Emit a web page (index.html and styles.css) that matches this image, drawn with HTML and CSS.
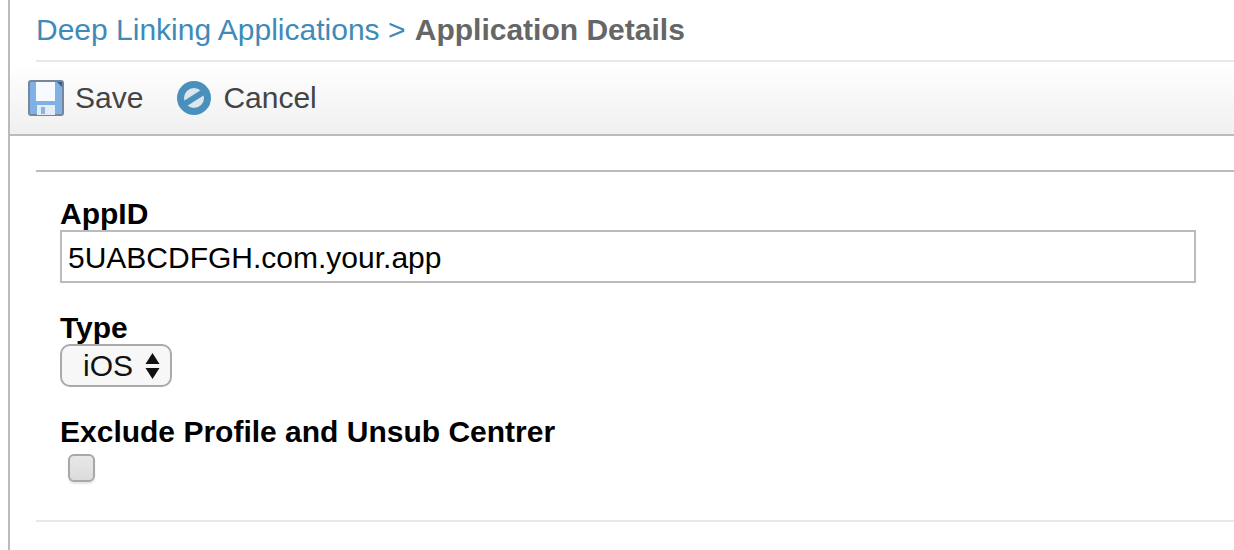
FILE: index.html
```html
<!DOCTYPE html>
<html lang="en">
<head>
    <meta charset="UTF-8">
    <title>Application Details</title>
    <link rel="stylesheet" href="styles.css">
</head>
<body>
    <div class="page">
        <h1 class="breadcrumb"><a href="#" class="crumb-link">Deep Linking Applications &gt;</a> <span class="crumb-current">Application Details</span></h1>
        <div class="toolbar">
            <a href="#" class="tool-button">
                <svg class="tool-icon" width="36" height="36" viewBox="0 0 36 36">
                    <rect x="1" y="1" width="34" height="34" rx="2" fill="#7fb0e6" stroke="#76879a" stroke-width="2"/>
                    <rect x="8" y="2" width="19" height="19" fill="#f6f9fd"/>
                    <path d="M29 2h5v5z" fill="#2f5f96"/>
                    <rect x="9" y="25" width="18" height="10" fill="#e4edf6"/>
                    <rect x="13" y="27" width="4" height="7" fill="#8db4de"/>
                </svg>
                <span>Save</span>
            </a>
            <a href="#" class="tool-button">
                <svg class="tool-icon" width="36" height="36" viewBox="0 0 36 36">
                    <circle cx="18" cy="18" r="13.5" fill="#dbe6ee" stroke="#4a90bd" stroke-width="7"/>
                    <path d="M7 25L29 11" stroke="#4a90bd" stroke-width="6"/>
                </svg>
                <span>Cancel</span>
            </a>
        </div>
        <div class="content">
            <form class="details-form">
                <div class="field">
                    <label for="appId" class="field-label">AppID</label>
                    <input type="text" id="appId" class="text-input" value="5UABCDFGH.com.your.app">
                </div>
                <div class="field">
                    <label class="field-label">Type</label>
                    <div class="select-box">
                        <span>iOS</span>
                        <svg width="15" height="28" viewBox="0 0 15 28">
                            <path d="M7.5 1L14.5 12H.5z" fill="#111"/>
                            <path d="M7.5 27L.5 16h14z" fill="#111"/>
                        </svg>
                    </div>
                </div>
                <div class="field">
                    <label class="field-label">Exclude Profile and Unsub Centrer</label>
                    <div class="checkbox"></div>
                </div>
            </form>
        </div>
    </div>
</body>
</html>
```

FILE: styles.css
```css
html, body {
    margin: 0;
    padding: 0;
    background-color: #fff;
}

body {
    font-family: 'Liberation Sans', Arial, sans-serif;
    height: 550px;
    overflow: hidden;
}

.page {
    margin-left: 8px;
    border-left: 2px solid #bbb;
    height: 550px;
    box-sizing: border-box;
}

.breadcrumb {
    margin: 0 0 0 26px;
    height: 62px;
    box-sizing: border-box;
    padding-top: 12px;
    border-bottom: 2px solid #e8e8e8;
    font-size: 30px;
    line-height: 36px;
    font-weight: bold;
    color: #666;
}

.crumb-link {
    color: #3f8ab8;
    font-weight: normal;
    text-decoration: none;
}

.crumb-current {
    margin-left: 1px;
}

.toolbar {
    display: flex;
    align-items: center;
    gap: 33px;
    height: 74px;
    padding: 0 0 0 18px;
    box-sizing: border-box;
    background: linear-gradient(#fff, #f0f0f0);
    border-bottom: 2px solid #bbb;
}

.tool-button {
    display: flex;
    align-items: center;
    gap: 11px;
    color: #444;
    font-size: 30px;
    text-decoration: none;
}

.tool-icon {
    filter: blur(0.6px);
}

.content {
    margin: 34px 0 0 26px;
    border-top: 2px solid #bbb;
    border-bottom: 2px solid #e8e8e8;
    height: 352px;
    box-sizing: border-box;
    padding: 26px 38px 0 24px;
}

.field {
    margin-bottom: 29px;
}

.field-label {
    display: block;
    font-size: 30px;
    line-height: 32px;
    font-weight: bold;
    color: #000;
}

.text-input {
    display: block;
    width: 100%;
    height: 53px;
    box-sizing: border-box;
    border: 2px solid #bbb;
    padding: 2px 6px 0;
    font-family: inherit;
    font-size: 30px;
    color: #000;
    outline: none;
}

.select-box {
    display: inline-flex;
    align-items: center;
    gap: 12px;
    width: 112px;
    height: 43px;
    box-sizing: border-box;
    padding-left: 21px;
    border: 2px solid #aaa;
    border-radius: 10px;
    background-color: #f7f7f7;
    font-size: 30px;
    color: #111;
}

.checkbox {
    width: 27px;
    height: 28px;
    margin: 6px 0 0 8px;
    box-sizing: border-box;
    border: 2px solid #a8a8a8;
    border-radius: 6px;
    background: linear-gradient(#e8e8e8, #dcdcdc);
    box-shadow: 0 2px 2px rgba(0, 0, 0, 0.1);
}
```
